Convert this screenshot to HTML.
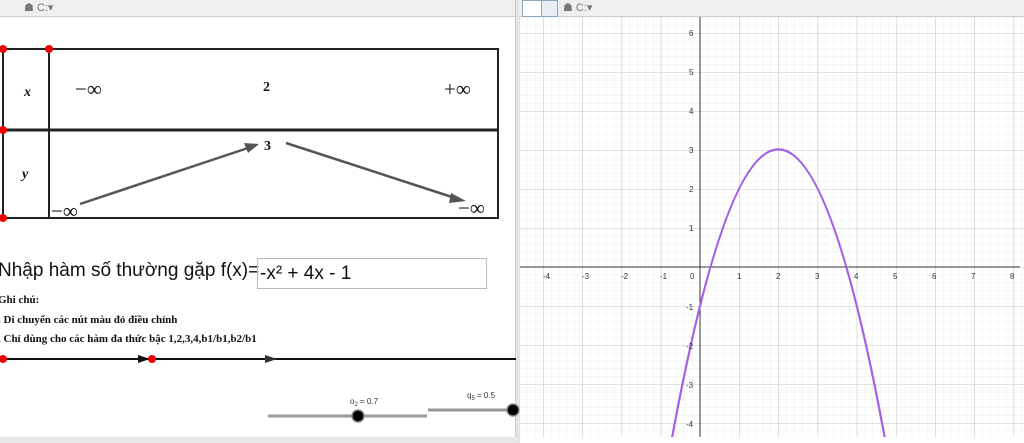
<!DOCTYPE html>
<html><head><meta charset="utf-8"><style>
body{margin:0;width:1024px;height:443px;overflow:hidden;background:#fff;position:relative;font-family:"Liberation Sans",sans-serif}
.abs{position:absolute}
.serif{font-family:"Liberation Serif",serif}
</style></head><body>
<div class="abs" style="left:0;top:0;width:516px;height:16px;background:#efefef;border-bottom:1px solid #d0d0d0"></div>
<div class="abs" style="left:24px;top:1px;font-size:11px;color:#777">&#9751; C:&#9662;</div>
<div class="abs" style="left:515px;top:0;width:4px;height:443px;background:#e4e4e4;border-left:1px solid #ccc"></div>
<div class="abs" style="left:519px;top:0;width:505px;height:16px;background:#efefef;border-bottom:1px solid #d0d0d0"></div>
<div class="abs" style="left:522px;top:0;width:18px;height:15px;border:1px solid #8ab;background:#fff"></div>
<div class="abs" style="left:541px;top:0;width:15px;height:15px;border:1px solid #8ab;background:#e8eef5"></div>
<div class="abs" style="left:563px;top:1px;font-size:11px;color:#777">&#9751; C:&#9662;</div>
<div class="abs" style="left:0;top:437px;width:516px;height:6px;background:#e8e8e8"></div>

<svg class="abs" style="left:0;top:0" width="1024" height="443">
<g stroke="#222" fill="none">
<rect x="3" y="49" width="495" height="169" stroke-width="2"/>
<line x1="49" y1="49" x2="49" y2="218" stroke-width="2"/>
<line x1="3" y1="130" x2="498" y2="130" stroke-width="3"/>
</g>
<g fill="#e00"><circle cx="3" cy="49" r="4"/><circle cx="49" cy="49" r="4"/><circle cx="3" cy="130" r="4"/><circle cx="3" cy="218" r="4"/></g>
<g stroke="#555" stroke-width="2.5" fill="#555">
<line x1="80" y1="204" x2="248" y2="148"/><polygon points="259,144 244,143 248,153" stroke="none"/>
<line x1="286" y1="143" x2="455" y2="198"/><polygon points="466,201 451,193 449,203" stroke="none"/>
</g>
<g font-family="Liberation Serif,serif" font-size="21" fill="#111">
<text x="24" y="96" font-style="italic" font-weight="bold" font-size="14">x</text>
<text x="22" y="178" font-style="italic" font-weight="bold" font-size="14">y</text>
<text x="75" y="96">−∞</text>
<text x="263" y="91" font-weight="bold" font-size="14">2</text>
<text x="444" y="96">+∞</text>
<text x="264" y="150" font-weight="bold" font-size="14">3</text>
<text x="51" y="218">−∞</text>
<text x="458" y="215">−∞</text>
</g>
<line x1="0" y1="359" x2="516" y2="359" stroke="#111" stroke-width="2"/>
<polygon points="138,355 150,359 138,363" fill="#111"/>
<polygon points="265,355 277,359 265,363" fill="#333"/>
<circle cx="3" cy="359" r="4" fill="#e00"/><circle cx="152" cy="359" r="4" fill="#e00"/>
<line x1="268" y1="416" x2="427" y2="416" stroke="#999" stroke-width="3"/>
<circle cx="358" cy="416" r="6" fill="#000" stroke="#888" stroke-width="1.5"/>
<line x1="428" y1="410" x2="516" y2="410" stroke="#999" stroke-width="3"/>
<circle cx="513" cy="410" r="6" fill="#000" stroke="#888" stroke-width="1.5"/>
<text x="350" y="404" font-size="8" fill="#333">o<tspan font-size="6" dy="2">2</tspan><tspan dy="-2"> = 0.7</tspan></text>
<text x="467" y="398" font-size="8" fill="#333">q<tspan font-size="6" dy="2">5</tspan><tspan dy="-2"> = 0.5</tspan></text>

<defs><clipPath id="c"><rect x="520" y="17" width="504" height="420"/></clipPath>
<pattern id="mn" x="700" y="267" width="7.84" height="7.8" patternUnits="userSpaceOnUse"><path d="M0 0V7.8M0 0H7.84" stroke="#ececec" stroke-width="1" fill="none"/></pattern>
<pattern id="mj" x="700" y="267" width="39.2" height="39" patternUnits="userSpaceOnUse"><path d="M0 0V39M0 0H39.2" stroke="#c4c4c4" stroke-width="1" fill="none"/></pattern></defs>
<g clip-path="url(#c)">
<rect x="520" y="17" width="504" height="420" fill="url(#mn)"/>
<rect x="520" y="17" width="504" height="420" fill="url(#mj)"/>
<line x1="520" y1="267" x2="1020" y2="267" stroke="#333"/>
<line x1="700" y1="17" x2="700" y2="440" stroke="#333"/>
<path d="M668.6 456.7 Q778.4 -157.9 888.2 456.7" stroke="#a45ee8" stroke-width="2.2" fill="none"/>
<g font-size="8" fill="#333">
<text x="543" y="279">-4</text><text x="582" y="279">-3</text><text x="621" y="279">-2</text><text x="660" y="279">-1</text><text x="690" y="279">0</text>
<text x="737" y="279">1</text><text x="776" y="279">2</text><text x="815" y="279">3</text><text x="854" y="279">4</text><text x="893" y="279">5</text><text x="932" y="279">6</text><text x="971" y="279">7</text><text x="1010" y="279">8</text>
<text x="689" y="36">6</text><text x="689" y="75">5</text><text x="689" y="114">4</text><text x="689" y="153">3</text><text x="689" y="192">2</text><text x="689" y="231">1</text>
<text x="686" y="310">-1</text><text x="686" y="349">-2</text><text x="686" y="388">-3</text><text x="686" y="427">-4</text>
</g>
</g>
</svg>

<div class="abs" style="left:-2px;top:260px;font-size:19px;color:#111;white-space:nowrap;font-family:'Liberation Sans','Noto Sans CJK SC',sans-serif">Nhập hàm số thường gặp f(x)=</div>
<div class="abs" style="left:257px;top:258px;width:226px;height:29px;border:1px solid #bbb;font-size:19px;line-height:29px;color:#111;padding-left:2px">-x² + 4x - 1</div>
<div class="abs serif" style="left:-2px;top:291px;font-size:11px;font-weight:bold;color:#111;line-height:19.5px;white-space:nowrap">Ghi chú:<br>. Di chuyển các nút màu đỏ điều chỉnh<br>. Chỉ dùng cho các hàm đa thức bậc 1,2,3,4,b1/b1,b2/b1</div>
</body></html>
